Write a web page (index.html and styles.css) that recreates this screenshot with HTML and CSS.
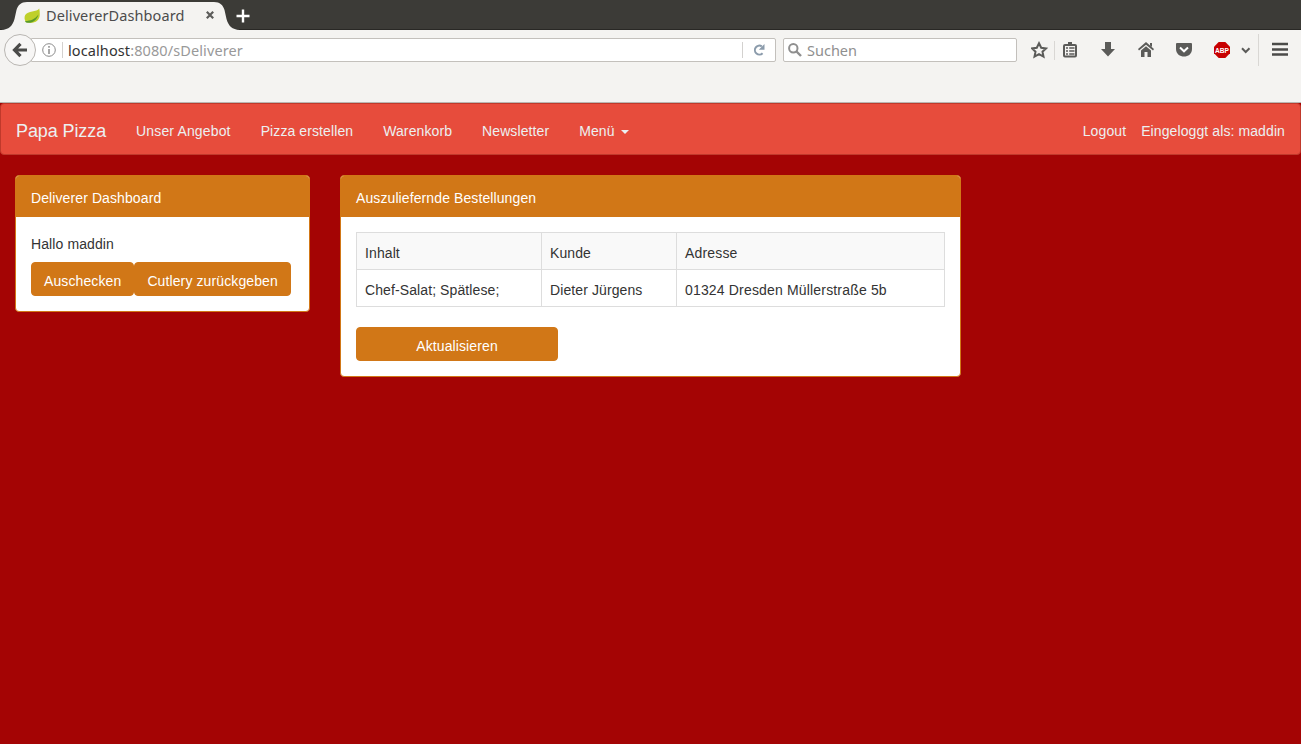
FILE: index.html
```html
<!DOCTYPE html>
<html lang="de">
<head>
<meta charset="utf-8">
<title>DelivererDashboard</title>
<link rel="stylesheet" href="styles.css">
</head>
<body>
<header class="browser">
  <div class="tabs">
    <div class="tab">
      <svg class="tab-shape" width="240" height="30" viewBox="0 0 240 30"><path d="M0 30C8 29.500 11.500 26 13.500 19L15.500 10C17 5 20 2 26 2H213C219 2 222 5 223.500 10L225.500 19C227.500 26 231 29.500 239 30Z" fill="#f4f3f1"/></svg>
      <svg class="leaf" width="16" height="16" viewBox="0 0 16 16"><path d="M15.200.4C13 4 3.500 2.500 1.200 7C0 9.500.5 12 2 14C8 16 16 14.500 15.800 6C15.800 4 15.600 2 15.200.4Z" fill="#bfd02a"/><path d="M1 13C7 13 11 11 14.500 6.500C13 12 8 16 2 14.500Z" fill="#5a9a28"/></svg>
      <span class="tab-title">DelivererDashboard</span>
      <svg class="close" width="8" height="8" viewBox="0 0 8 8"><path d="M.8.8L7.200 7.200M7.200.8L.8 7.200" stroke="#5c5c5a" stroke-width="2.200"/></svg>
    </div>
    <svg class="plus" width="14" height="14" viewBox="0 0 14 14"><path d="M7 .5V13.500M.5 7H13.500" stroke="#fff" stroke-width="2.400"/></svg>
  </div>
  <div class="toolbar">
    <div class="back"><svg width="16" height="16" viewBox="0 0 16 16"><path d="M8.500 1.800L2.500 8L8.500 14.200M3 8H15" fill="none" stroke="#4b4b49" stroke-width="3.200"/></svg></div>
    <div class="address">
      <svg width="14" height="14" viewBox="0 0 14 14"><circle cx="7" cy="7" r="6.300" fill="none" stroke="#8b8b8b"/><path d="M7 3V4.700M7 6V11" stroke="#8b8b8b" stroke-width="1.500"/></svg>
      <span class="sep"></span>
      <span class="url"><b>localhost</b>:8080/sDeliverer</span>
      <span class="sep"></span>
      <svg class="reload" width="12" height="12" viewBox="0 0 12 12"><path d="M8.800 2.300A4.500 4.500 0 1 0 9.600 9.300" fill="none" stroke="#8b9bab" stroke-width="2"/><path d="M11.500 0V5.700H5.800Z" fill="#8b9bab"/></svg>
    </div>
    <div class="search">
      <svg width="14" height="14" viewBox="0 0 14 14"><circle cx="5.300" cy="5.300" r="4.200" fill="none" stroke="#8f8f8f" stroke-width="2"/><path d="M8.500 8.500L13 13" stroke="#8f8f8f" stroke-width="2.400"/></svg>
      <span>Suchen</span>
    </div>
    <svg class="tools" width="270" height="32" viewBox="0 0 270 32">
      <g fill="none" stroke="#5b5b59" stroke-width="2">
        <path d="M8 9.300L10.200 13.800L15 14.400L11.500 17.700L12.500 22.700L8 20.200L3.500 22.700L4.500 17.700L1 14.400L5.800 13.800Z"/>
        <rect x="33" y="11" width="12" height="11.500" rx="1"/>
        <path d="M35 14H37M38.200 14H43.500M35 17H37M38.200 17H43.500M35 20H37M38.200 20H43.500" stroke-width="1.400"/>
        <path d="M211 14.300L214.700 18L218.500 14.300"/>
        <path d="M241 10H257M241 15.500H257M241 20.500H257" stroke-width="2.600" stroke="#4b4b49"/>
      </g>
      <g fill="#5b5b59">
        <path d="M37 8H41V10H43V12H35V10H37Z"/><path d="M74 8H80V15H84L77 22.500L70 15H74Z"/>
        <path d="M115 8L123 15L122 16.500L115 10.700L108 16.500L107 15Z"/><path d="M110 16.500L115 12.300L120 16.500V23H116.500V18H113.500V23H110Z"/><path d="M119 9H121V13L119 11.500Z"/>
        <path d="M145 10Q145 9 146 9H160Q161 9 161 10V15C161 25 145 25 145 15Z"/>
      </g>
      <path d="M149 13.500L153 17.300L157 13.500" fill="none" stroke="#fff" stroke-width="2"/>
      <path d="M187.700 8H194.300L199 12.700V19.300L194.300 24H187.700L183 19.300V12.700Z" fill="#c70000"/>
      <text x="184" y="18.900" class="abp" textLength="14" lengthAdjust="spacingAndGlyphs">ABP</text>
      <path d="M23.500 7V26M227.500 0V32" stroke="#d9d7d4"/>
    </svg>
  </div>
</header>
<main class="page">
  <nav class="navbar">
    <a class="brand">Papa Pizza</a>
    <a class="offer">Unser Angebot</a><a>Pizza erstellen</a><a>Warenkorb</a><a>Newsletter</a>
    <a class="menu">Menü <i class="caret"></i></a>
    <a class="logout">Logout</a><span class="user">Eingeloggt als: maddin</span>
  </nav>
  <div class="columns">
    <section class="panel side">
      <h2>Deliverer Dashboard</h2>
      <div class="body">
        <p>Hallo maddin</p>
        <div class="buttons"><button>Auschecken</button><button>Cutlery zurückgeben</button></div>
      </div>
    </section>
    <section class="panel orders">
      <h2>Auszuliefernde Bestellungen</h2>
      <div class="body">
        <table>
          <colgroup><col class="c1"><col class="c2"><col></colgroup>
          <tr><td>Inhalt</td><td>Kunde</td><td>Adresse</td></tr>
          <tr><td>Chef-Salat; Spätlese;</td><td>Dieter Jürgens</td><td>01324 Dresden Müllerstraße 5b</td></tr>
        </table>
        <button class="refresh">Aktualisieren</button>
      </div>
    </section>
  </div>
</main>
</body>
</html>
```
FILE: styles.css
```css
* { box-sizing: border-box; }
body { margin: 0; height: 744px; overflow: hidden; background: #a40404; color: #333; font: 14px/20px "Liberation Sans", Arial, sans-serif; }
svg { display: block; flex: none; }
.browser { height: 103px; background: #f4f3f1; border-bottom: 1px solid #b9b6b2; font-family: "Noto Sans", "Open Sans", sans-serif; }
.tabs { height: 30px; display: flex; align-items: center; background: #3c3b37; border-bottom: 1px solid #292825; padding-left: 10px; }
.tab { position: relative; width: 218px; height: 30px; display: flex; align-items: center; padding: 1px 0 0 14px; }
.tab-shape { position: absolute; left: -9px; top: 0; }
.leaf, .tab-title, .close { position: relative; }
.leaf { margin-top: 1px; }
.tab-title { margin-left: 6px; width: 159px; font-size: 14.5px; letter-spacing: .1px; color: #4c4c4c; white-space: nowrap; }
.close { margin-left: 1px; }
.plus { position: relative; margin: 2px 0 0 8px; }
.toolbar { display: flex; align-items: center; height: 40px; padding-left: 4px; }
.back { position: relative; width: 32px; height: 32px; border: 1px solid #b9b6b2; border-radius: 50%; background: #f7f6f5; display: flex; align-items: center; justify-content: center; }
.address { height: 24px; width: 745px; margin-left: -5px; border: 1px solid #c3c0bc; border-radius: 0 2px 2px 0; background: #fff; display: flex; align-items: center; padding-left: 10px; }
.sep { width: 1px; height: 16px; background: #d3d1cf; margin-left: 6px; }
.url { width: 674px; margin-left: 5px; font-size: 14.5px; letter-spacing: .1px; color: #999; white-space: nowrap; }
.url + .sep { margin-left: 0; }
.url b { font-weight: 400; color: #333; }
.reload { margin-left: 10px; }
.search { height: 24px; width: 234px; margin-left: 7px; border: 1px solid #c3c0bc; border-radius: 2px; background: #fff; display: flex; align-items: center; padding-left: 4px; gap: 5px; font-size: 14.5px; color: #8f8f8f; }
.tools { margin-left: 14px; }
.abp { font: bold 8px "Liberation Sans", sans-serif; fill: #fff; }
.page { letter-spacing: .1px; }
.navbar { height: 52px; display: flex; align-items: center; gap: 30px; padding: 4px 15px 0; background: #e74c3c; border: 1px solid #c0392b; border-radius: 4px; color: #ecf0f1; white-space: nowrap; }
.brand { font-size: 18px; letter-spacing: -.1px; }
.offer { letter-spacing: .15px; }
.menu { display: flex; align-items: center; gap: 6px; }
.caret { border: 4px solid transparent; border-top-color: #ecf0f1; border-bottom: 0; margin-top: 1px; }
.logout { margin-left: auto; }
.user { margin-left: -15px; }
.columns { display: flex; align-items: flex-start; gap: 30px; padding: 20px 15px; }
.panel { background: #fff; border: 1px solid #d17717; border-radius: 4px; }
.side { width: 295px; }
.orders { width: 621px; }
.panel h2 { margin: 0; padding: 12px 15px 9px; height: 41px; background: #d17717; color: #fff; font-size: 14px; font-weight: 400; line-height: 20px; border-radius: 3px 3px 0 0; }
.body { padding: 15px; }
.side .body { padding-top: 17px; }
p { margin: 0 0 8px; }
.buttons { display: flex; }
button { display: block; height: 34px; padding: 4px 12px 0; border: 1px solid #d17717; border-radius: 4px; background: #d17717; color: #fff; font: inherit; letter-spacing: .11px; white-space: nowrap; }
table { width: 589px; border-collapse: collapse; table-layout: fixed; margin-bottom: 20px; }
.c1 { width: 185px; }
.c2 { width: 135px; }
td { border: 1px solid #ddd; padding: 10px 8px 6px; }
td:last-child { letter-spacing: .17px; }
tr:first-child { background: #f9f9f9; }
.refresh { width: 202px; }
```
